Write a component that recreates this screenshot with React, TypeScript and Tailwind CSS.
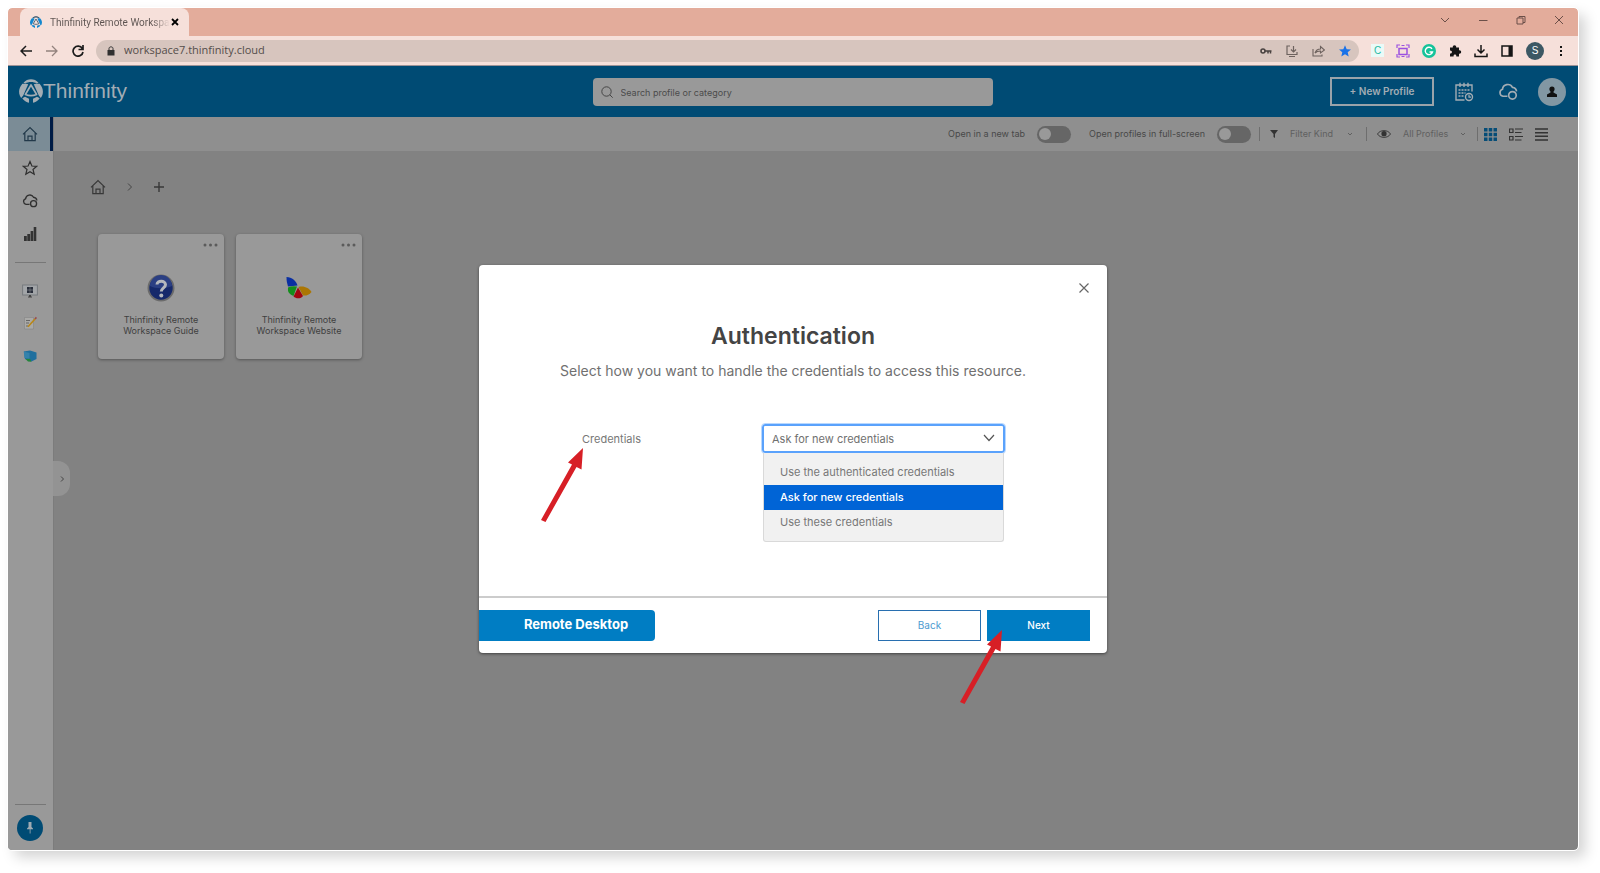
import React from "react";

function ThinfinityMark({ className, dark = "currentColor", light = "currentColor" }: { className?: string; dark?: string; light?: string }) {
  return (
    <svg viewBox="0 0 24 24" className={className} aria-hidden="true">
      <path d="M4.500 3.800C8.500 -.8 15.500 -.8 19.500 3.800L17.800 4.600C14.500 2.600 9.500 2.600 6.200 4.600Z" fill={light} />
      <path d="M12 6L17.600 15.500C14 17 10 17 6.400 15.500Z" fill="none" stroke={light} strokeWidth="1.700" strokeLinejoin="round" />
      <path d="M3.400 4.800C-.8 9.500 -.8 15 2.200 19L4.200 16.500 9.200 5.200C7.200 4.700 5.500 4.700 3.400 4.800Z" fill={dark} />
      <path d="M20.600 4.800C24.800 9.500 24.800 15 21.800 19L19.800 16.500 14.800 5.200C16.800 4.700 18.500 4.700 20.600 4.800Z" fill={dark} />
      <path d="M3.300 19.200L6 17.800 10 19.700V23.800C7.500 23.400 5 21.800 3.300 19.200ZM20.700 19.200L18 17.800 14 19.700V23.800C16.500 23.400 19 21.800 20.700 19.200Z" fill={dark} />
    </svg>
  );
}

function HomeIcon() {
  return (
    <svg viewBox="0 0 16 16" className="size-4" fill="none" stroke="currentColor" strokeWidth="1.2" aria-hidden="true">
      <path d="M1 8.400L8 1.600 15 8.400M2.800 7V14.600H13.200V7M6 14.500V10.200H10V14.500" />
    </svg>
  );
}

function StarIcon() {
  return (
    <svg viewBox="0 0 16 16" className="size-4" fill="none" stroke="currentColor" strokeWidth="1.2" aria-hidden="true">
      <path d="M8 1.500L9.900 6 14.700 6.300 11 9.500 12.200 14.300 8 11.700 3.800 14.300 5 9.500 1.300 6.300 6.100 6Z" />
    </svg>
  );
}

function CloudLockIcon({ className = "size-4" }: { className?: string }) {
  return (
    <svg viewBox="0 0 18 18" className={className} fill="none" stroke="currentColor" strokeWidth="1.500" aria-hidden="true">
      <path d="M8.500 12.800H4.500A3.200 3.200 0 0 1 4 6.600 4.800 4.800 0 0 1 13 4.800C15 5 16.500 6.200 16.700 8.500" />
      <circle cx="13" cy="12" r="3.400" />
    </svg>
  );
}

function BarsIcon() {
  return (
    <svg viewBox="0 0 16 16" className="size-4" fill="#333333" aria-hidden="true">
      <path d="M2 10h2.800v5H2zM5.300 8h2.800v7H5.300zM8.600 5h2.600v10H8.600zM11.700 1h2.600v14h-2.600z" />
    </svg>
  );
}

function MonitorIcon() {
  return (
    <svg viewBox="0 0 16 14" className="h-3.5 w-4" aria-hidden="true">
      <rect x=".6" y="1" width="14.800" height="10" fill="#a2a5a8" stroke="#777b7e" strokeWidth="1" />
      <path d="M5 3h2.800v2.700H5zM8.200 3H11v2.700H8.200zM5 6.200h2.800V9H5zM8.200 6.200H11V9H8.200z" fill="#292e3a" />
      <path d="M7 11h2v1.500h1v1H6v-1h1z" fill="#444" />
    </svg>
  );
}

function NoteIcon() {
  return (
    <svg viewBox="0 0 16 16" className="size-4" aria-hidden="true">
      <path d="M2.500 2.500H11.500V14H2.500Z" fill="#a9a9a7" stroke="#858585" strokeWidth=".6" />
      <path d="M4 5.500H8M4 8H7M4 11H6" stroke="#666" strokeWidth="1" />
      <path d="M6 11.800L13 4" stroke="#b98716" strokeWidth="1.600" />
      <path d="M13 4L14.400 2.400" stroke="#9b4b4b" strokeWidth="1.600" />
    </svg>
  );
}

function BoxIcon() {
  return (
    <svg viewBox="0 0 16 16" className="size-4" aria-hidden="true">
      <path d="M1.800 3.500L8 2.500 14.500 4.500V11L9.500 13.500 3 11Z" fill="#1f6f9e" />
      <path d="M1.800 3.500L7.500 5V11L2.500 10Z" fill="#3482ab" />
      <path d="M3.500 11L8 10.800 9.500 13.800 6 13.500Z" fill="#24843c" />
    </svg>
  );
}

function CalendarIcon() {
  return (
    <svg viewBox="0 0 20 20" className="size-5" fill="none" stroke="currentColor" strokeWidth="1.400" aria-hidden="true">
      <path d="M18 9.500V3H2V18H10.500M6 .8V5M10 .8V5M14 .8V5" />
      <path d="M4.500 8H15.500M4.500 11H11.500M4.500 14H9.500" strokeWidth="1.700" strokeDasharray="2 1" />
      <circle cx="15" cy="15" r="3.500" />
      <path d="M15 12.800V15.200H17" strokeWidth="1.200" />
    </svg>
  );
}

function Arrow({ className }: { className?: string }) {
  return (
    <svg viewBox="0 0 44 76" className={className} aria-hidden="true">
      <path d="M42 1L40.500 22.500 35.500 20 4.500 75 0 73 31 17.500 27 15.500Z" fill="#d71f26" />
    </svg>
  );
}

function Caret() {
  return (
    <svg viewBox="0 0 8 8" className="size-2" fill="none" stroke="currentColor" aria-hidden="true">
      <path d="M2 3L4 5 6 3" />
    </svg>
  );
}

function TabStrip() {
  return (
    <div className="flex h-7 items-end bg-[#e3ac9b] pl-3">
      <div className="flex h-7 w-[169px] items-center rounded-t-lg bg-[#f6e0da] pl-2.5">
        <ThinfinityMark className="size-3 shrink-0" dark="#1287cf" light="#35546c" />
        <span className="ml-2 whitespace-nowrap bg-gradient-to-r from-[#5c5350] from-85% to-transparent bg-clip-text font-['Roboto',sans-serif] text-[10px] text-transparent">
          Thinfinity Remote Workspa
        </span>
        <button type="button" aria-label="Close tab" className="ml-auto mr-2.5 text-black">
          <svg viewBox="0 0 8 8" className="size-2" stroke="currentColor" strokeWidth="1.800"><path d="M1 1L7 7M7 1L1 7" /></svg>
        </button>
      </div>
      <div className="ml-auto flex h-6 items-center gap-7 self-start pr-3.5 text-[#6b4f48]">
        <button type="button" aria-label="Search tabs"><svg viewBox="0 0 10 10" className="size-2.5" fill="none" stroke="currentColor"><path d="M1 3L5 7 9 3" /></svg></button>
        <button type="button" aria-label="Minimize"><svg viewBox="0 0 10 10" className="size-2.5" fill="none" stroke="currentColor"><path d="M1 5.500H9.500" /></svg></button>
        <button type="button" aria-label="Restore"><svg viewBox="0 0 10 10" className="size-2.5" fill="none" stroke="currentColor"><path d="M1 3H7V9H1ZM3 3V1.500H9V7.500H7" /></svg></button>
        <button type="button" aria-label="Close"><svg viewBox="0 0 10 10" className="size-2.5" fill="none" stroke="currentColor"><path d="M1 1L9 9M9 1L1 9" /></svg></button>
      </div>
    </div>
  );
}

function AddressBar() {
  return (
    <div className="flex h-[30px] items-center border-b border-[#9d9296] bg-[#f6e0da] pl-3 pr-3 text-[#1c1c1c]">
      <div className="flex items-center gap-3.5">
        <button type="button" aria-label="Back in history"><svg viewBox="0 0 12 12" className="size-3" fill="none" stroke="currentColor" strokeWidth="1.500"><path d="M12 6H1M6 1L1 6 6 11" /></svg></button>
        <button type="button" aria-label="Forward" className="text-[#93837e]"><svg viewBox="0 0 12 12" className="size-3" fill="none" stroke="currentColor" strokeWidth="1.300"><path d="M0 6H11M6 1L11 6 6 11" /></svg></button>
        <button type="button" aria-label="Reload"><svg viewBox="0 0 12 12" className="size-3" fill="none" stroke="currentColor" strokeWidth="1.700"><path d="M10.300 3.500A5 5 0 1 0 11 7M11 0V4.500H6.500" /></svg></button>
      </div>
      <div className="ml-3 flex h-[22px] flex-1 items-center rounded-full bg-[#d7c5be] pl-2.5 pr-2">
        <svg viewBox="0 0 10 10" className="size-2.5" aria-hidden="true"><path d="M1.500 4H8.500V9.500H1.500Z" fill="#303030" /><path d="M3 4V2.500C3 .3 7 .3 7 2.500V4" fill="none" stroke="#303030" /></svg>
        <input aria-label="Address" readOnly defaultValue="workspace7.thinfinity.cloud" className="ml-2 min-w-0 flex-1 bg-transparent font-['Open_Sans',sans-serif] text-[11px] text-[#544d4a] outline-none" />
        <div className="flex items-center gap-3.5 text-[#6d625e]">
          <svg viewBox="0 0 12 12" className="size-3" aria-hidden="true"><circle cx="3" cy="6" r="2" fill="none" stroke="#494240" strokeWidth="1.600" /><path d="M5 6H11.500M8 6V8.500M10.500 6V8.500" stroke="#494240" strokeWidth="1.500" /></svg>
          <svg viewBox="0 0 12 12" className="size-3" fill="none" stroke="currentColor" strokeWidth="1.200" aria-hidden="true"><path d="M4 1H1V9.500H11V7M3 11.500H9M7.500 1V6.500M5 4.500L7.500 7 10 4.500" /></svg>
          <svg viewBox="0 0 13 12" className="h-3 w-[13px]" fill="none" stroke="currentColor" strokeWidth="1.100" aria-hidden="true"><path d="M1 4V11H10V9.500M3 8C4 5 6 4 8.500 4V1.500L12.500 5 8.500 8V6C6 6 4.500 6.500 3 8Z" /></svg>
          <svg viewBox="0 0 12 12" className="size-3" fill="#1a73e8" aria-hidden="true"><path d="M6 .3L7.700 4.200 12 4.500 8.700 7.300 9.700 11.600 6 9.300 2.300 11.600 3.300 7.300 0 4.500 4.300 4.200Z" /></svg>
        </div>
      </div>
      <div className="ml-3 flex items-center gap-3">
        <span className="grid size-[13px] place-items-center bg-[#eafaf7] font-['Liberation_Sans',sans-serif] text-[10px] leading-none text-[#27b9a4]">C</span>
        <svg viewBox="0 0 14 14" className="size-3.5" fill="none" stroke="#9b51e0" aria-hidden="true"><path d="M3 4.500H11V10.500H3Z" strokeWidth="1.500" /><path d="M1 4V1H4M10 1H13V4M13 10V13H10M4 13H1V10M5.500 1.500H8.500M5.500 12.500H8.500" strokeWidth="1.200" /></svg>
        <svg viewBox="0 0 14 14" className="size-3.5" aria-hidden="true"><circle cx="7" cy="7" r="7" fill="#15c39a" /><path d="M10 4.800A3.700 3.700 0 1 0 10.500 8H7.500M10.500 8L9 10" fill="none" stroke="#fff" strokeWidth="1.400" /></svg>
        <svg viewBox="0 0 14 14" className="size-3.5" fill="#151515" aria-hidden="true"><path d="M2 3.500H4.800C4.300 .6 8.700 .6 8.200 3.500H11V6.300C13.900 5.800 13.900 10.200 11 9.700V12.500H8.300C8.700 9.900 5.200 9.900 5.600 12.500H2V9.500C4.600 9.900 4.600 6.200 2 6.500Z" /></svg>
        <svg viewBox="0 0 14 14" className="size-3.5" fill="none" stroke="#151515" strokeWidth="1.500" aria-hidden="true"><path d="M7 1V9M3.500 5.500L7 9 10.500 5.500M1 9.500V12.500H13V9.500" /></svg>
        <svg viewBox="0 0 14 14" className="size-3.5" aria-hidden="true"><path d="M2 2H12V12H2Z" fill="none" stroke="#151515" strokeWidth="1.500" /><path d="M8.500 2H12V12H8.500Z" fill="#151515" /></svg>
        <span className="grid size-[18px] place-items-center rounded-full bg-[#3c5864] font-['Liberation_Sans',sans-serif] text-[10px] text-white">S</span>
        <svg viewBox="0 0 10 14" className="h-3.5 w-2.5" fill="#151515" aria-hidden="true"><path d="M4 2H6V4H4ZM4 6H6V8H4ZM4 10H6V12H4Z" /></svg>
      </div>
    </div>
  );
}

function AppHeader() {
  return (
    <header className="grid h-[51px] grid-cols-[1fr_400px_1fr] items-center bg-[#004b74] pl-[11px] pr-3">
      <a href="#home" className="flex items-center pb-0.5 text-[#a3adb4]">
        <ThinfinityMark className="size-6" />
        <span className="font-['Liberation_Sans',sans-serif] text-[21px] leading-6">Thinfinity</span>
      </a>
      <label className="flex h-7 items-center rounded-sm bg-[#999999] px-2">
        <svg viewBox="0 0 12 12" className="size-3" fill="none" stroke="#464646" aria-hidden="true"><circle cx="5.500" cy="5.500" r="4.700" /><path d="M8.800 8.800L11.700 11.700" /></svg>
        <input type="search" aria-label="Search" placeholder="Search profile or category" className="ml-2 min-w-0 flex-1 bg-transparent pt-0.5 text-[9px] outline-none placeholder:text-[#4b4b4b]" />
      </label>
      <div className="flex items-center justify-end text-[#a3adb4]">
        <button type="button" className="h-[29px] w-[104px] border-2 border-[#9aa3aa] text-[10px] font-semibold">+ New Profile</button>
        <button type="button" aria-label="Schedule" className="ml-5"><CalendarIcon /></button>
        <button type="button" aria-label="Cloud access" className="ml-6"><CloudLockIcon className="size-5" /></button>
        <button type="button" aria-label="Account" className="ml-5 grid size-7 place-items-center rounded-full bg-[#8297a3]">
          <svg viewBox="0 0 12 12" className="size-3" fill="#111" aria-hidden="true"><circle cx="6" cy="3" r="2.600" /><path d="M4.500 4H7.500V6.500L11 8.500V11H1V8.500L4.500 6.500Z" /></svg>
        </button>
      </div>
    </header>
  );
}

function Toggle({ label }: { label: string }) {
  return (
    <label className="flex items-center gap-3">
      {label}
      <input type="checkbox" className="peer sr-only" />
      <span className="flex h-[17px] w-[34px] items-center rounded-full bg-[#666666] px-0.5 peer-checked:justify-end">
        <span className="size-3 rounded-full bg-[#999999]" />
      </span>
    </label>
  );
}

function FilterBar() {
  return (
    <div className="flex h-[34px] items-center justify-end bg-[#8f8f8f] pr-[30px] text-[9px] text-[#484848]">
      <div className="flex items-center gap-[18px]">
        <Toggle label="Open in a new tab" />
        <Toggle label="Open profiles in full-screen" />
      </div>
      <span className="ml-2 h-3.5 w-px bg-[#6e6e6e]" />
      <svg viewBox="0 0 8 8" className="ml-2.5 size-2" fill="#333" aria-hidden="true"><path d="M0 0H8L5 4V8L3.500 7V4Z" /></svg>
      <button type="button" className="ml-3 flex w-[64px] items-center justify-between text-[#606060]">Filter Kind <Caret /></button>
      <span className="ml-3 h-3.5 w-px bg-[#6e6e6e]" />
      <svg viewBox="0 0 14 10" className="ml-2.5 h-2.5 w-3.5" aria-hidden="true"><path d="M.5 5C3 .5 11 .5 13.500 5 11 9.500 3 9.500 .5 5Z" fill="none" stroke="#3c3c3c" /><circle cx="7" cy="4.700" r="2.600" fill="#333" /></svg>
      <button type="button" className="ml-3 flex w-[64px] items-center justify-between text-[#606060]">All Profiles <Caret /></button>
      <span className="ml-2.5 h-3.5 w-px bg-[#6e6e6e]" />
      <div className="ml-1.5 flex items-center gap-3">
        <button type="button" aria-label="Grid view"><svg viewBox="0 0 13 13" className="size-[13px]" fill="#064d77"><path d="M0 0h3.500v3.500H0zM4.750 0h3.500v3.500h-3.500zM9.500 0H13v3.500H9.500zM0 4.750h3.500v3.500H0zM4.750 4.750h3.500v3.500h-3.500zM9.500 4.750H13v3.500H9.500zM0 9.500h3.500V13H0zM4.750 9.500h3.500V13h-3.500zM9.500 9.500H13V13H9.500z" /></svg></button>
        <button type="button" aria-label="Detail view"><svg viewBox="0 0 14 13" className="h-[13px] w-3.5" fill="none" stroke="#333" strokeWidth="1.200"><path d="M.5 1H4V4.500H.5ZM.5 8.500H4V12H.5ZM6 1H14M6 4.500H12.500M6 8.500H14M6 12H12.500" /></svg></button>
        <button type="button" aria-label="List view"><svg viewBox="0 0 13 13" className="size-[13px]" fill="none" stroke="#333" strokeWidth="1.400"><path d="M0 1H13M0 4.700H13M0 8.300H13M0 12H13" /></svg></button>
      </div>
    </div>
  );
}

function Sidebar() {
  return (
    <nav className="relative flex w-[46px] shrink-0 flex-col border-r border-[#7c7c7c] bg-[#999999] text-[#303030]">
      <a href="#home" aria-label="Home" className="grid h-[34px] place-items-center border-r-[3px] border-[#001c46] bg-[#7b8c96] pl-0.5 text-[#22394a]"><HomeIcon /></a>
      <a href="#favorites" aria-label="Favorites" className="grid h-[33px] place-items-center pr-px"><StarIcon /></a>
      <a href="#cloud" aria-label="Cloud" className="grid h-[33px] place-items-center pr-px"><CloudLockIcon /></a>
      <a href="#analytics" aria-label="Analytics" className="grid h-[33px] place-items-center pr-px"><BarsIcon /></a>
      <hr className="mx-[7px] mt-3 border-[#777777]" />
      <div className="mt-3 flex flex-col">
        <a href="#desktops" aria-label="Desktops" className="grid h-8 place-items-center pr-px"><MonitorIcon /></a>
        <a href="#notes" aria-label="Notes" className="grid h-[31px] place-items-center pr-px"><NoteIcon /></a>
        <a href="#storage" aria-label="Storage" className="grid h-[35px] place-items-center pr-px"><BoxIcon /></a>
      </div>
      <hr className="mx-[7px] mt-auto border-[#777777]" />
      <button type="button" aria-label="Pin menu" className="mb-[9px] ml-[9px] mt-2.5 grid size-[26px] place-items-center rounded-full bg-[#004b74]">
        <svg viewBox="0 0 10 12" className="h-3 w-2.5" fill="#9fabb2" aria-hidden="true"><path d="M3.500 0H6.500V5L8 6.500V7.200H5.500V11.500H4.700V7.200H2V6.500L3.500 5Z" /></svg>
      </button>
      <button type="button" aria-label="Expand menu" className="absolute left-full top-[344px] grid h-[35px] w-[17px] place-items-center rounded-r-xl bg-[#939393] text-[#444]">
        <svg viewBox="0 0 8 8" className="size-2" fill="none" stroke="currentColor"><path d="M3 1.500L5.500 4 3 6.500" /></svg>
      </button>
    </nav>
  );
}

function ProfileCard({ icon, title, detail }: { icon: React.ReactNode; title: string; detail: string }) {
  return (
    <article className="flex h-[125px] w-[126px] flex-col items-center rounded-sm bg-[#999999] shadow-[0_1px_3px_rgba(0,0,0,0.35)]">
      <button type="button" aria-label="More options" className="mr-1.5 mt-[9px] self-end text-[#5b5b5b]">
        <svg viewBox="0 0 15 4" className="h-1 w-[15px]" fill="currentColor"><circle cx="2" cy="2" r="1.500" /><circle cx="7.500" cy="2" r="1.500" /><circle cx="13" cy="2" r="1.500" /></svg>
      </button>
      <div className="mt-[27px] grid h-7 place-items-center">{icon}</div>
      <h2 className="mt-3 text-center text-[9px] leading-[11px] text-[#3f3f3f]">{title}<br />{detail}</h2>
    </article>
  );
}

const helpIcon = (
  <svg viewBox="0 0 28 28" className="size-7" aria-hidden="true">
    <circle cx="14" cy="14" r="12.600" fill="#16296b" stroke="#6b6b6b" strokeWidth="1.800" />
    <path d="M3 12A11 11 0 0 1 25 12C18 15 9 15 3 12Z" fill="#2b3f83" />
    <path d="M10 10.500C10 6 18.500 6 18.500 10.800 18.500 14 14.300 13.800 14.300 17.500" fill="none" stroke="#b5b8bd" strokeWidth="3" />
    <circle cx="14.300" cy="21.500" r="2" fill="#b5b8bd" />
  </svg>
);

const butterflyIcon = (
  <svg viewBox="0 0 28 24" className="h-6 w-7" aria-hidden="true">
    <path d="M1.500 1C7 1 11 5 12.500 9.500L3 10.500C2 7 1.500 5 1.500 1Z" fill="#0a2fa2" />
    <path d="M3 11.500Q7 9.500 12 10.500L8.500 20C4 18 2.500 16 3 11.500Z" fill="#148e1c" />
    <path d="M13 11.500L18 20C16 23 11 23 8.500 20.500Z" fill="#a30610" />
    <path d="M13.500 11C19 9.500 24 12 26.500 16 24 19 21 20 18 19.500Z" fill="#ab7603" />
  </svg>
);

function Dialog() {
  const options = ["Use the authenticated credentials", "Ask for new credentials", "Use these credentials"];
  return (
    <section role="dialog" aria-labelledby="dialog-title" className="relative w-[628px] rounded-sm bg-white shadow-[0_1px_3px_rgba(0,0,0,0.5)]">
      <div className="flex h-[57px] justify-end pr-[18px] pt-[18px]">
        <button type="button" aria-label="Close dialog" className="size-2.5 text-[#666]">
          <svg viewBox="0 0 10 10" className="size-2.5" fill="none" stroke="currentColor" strokeWidth="1.200"><path d="M.5 .5L9.500 9.500M9.500 .5L.5 9.500" /></svg>
        </button>
      </div>
      <h1 id="dialog-title" className="text-center text-[23px] font-semibold leading-7 text-[#444]">Authentication</h1>
      <p className="mt-[11px] text-center text-[14px] leading-5 text-[#707070]">Select how you want to handle the credentials to access this resource.</p>
      <div className="mt-[43px] flex h-[172px] items-start pl-[103px]">
        <label htmlFor="credentials" className="relative w-[180px] text-[11px] leading-[30px] text-[#777]">
          Credentials
          <Arrow className="absolute -left-[41px] top-[23px] h-[76px] w-[44px]" />
        </label>
        <div className="relative w-[243px]">
          <select id="credentials" defaultValue={options[1]} className="h-[29px] w-full appearance-none rounded-[3px] border-2 border-[#5aa2fc] bg-white px-2 pt-0.5 text-[11px] text-[#707070] outline outline-[#b8d8ff]">
            {options.map((option) => <option key={option}>{option}</option>)}
          </select>
          <svg viewBox="0 0 12 8" className="pointer-events-none absolute right-2.5 top-2.5 h-2 w-3" fill="none" stroke="#555" strokeWidth="1.200" aria-hidden="true"><path d="M1 1L6 6.500 11 1" /></svg>
          <ul role="listbox" aria-label="Credential options" className="absolute inset-x-px top-[29px] h-[89px] rounded-b-[3px] border border-t-0 border-[#d9d9d9] bg-[#f1f1f1] pt-[7px] text-[11px] leading-[25px] text-[#777]">
            {options.map((option, index) => (
              <li key={option} role="option" aria-selected={index === 1} className={index === 1 ? "bg-[#0064d6] px-4 font-medium text-white" : "px-4"}>{option}</li>
            ))}
          </ul>
        </div>
      </div>
      <footer className="flex h-[57px] items-start border-t-2 border-[#cccccc] pr-[17px] pt-3">
        <strong className="h-[31px] w-[176px] rounded-r bg-[#007dc3] pl-[18px] text-center text-[13px] font-bold leading-[28px] text-white">Remote Desktop</strong>
        <button type="button" className="ml-auto h-[31px] w-[103px] border border-[#286fb0] text-[10px] text-[#4d9bd0]">Back</button>
        <button type="button" className="relative ml-1.5 h-[31px] w-[103px] bg-[#007dc3] text-[10px] font-medium text-white">
          Next
          <Arrow className="absolute -left-[27px] top-[19px] h-[76px] w-[44px]" />
        </button>
      </footer>
    </section>
  );
}

export default function App() {
  return (
    <div className="min-h-screen bg-white p-2 pb-[23px] pr-[22px] font-['Inter',sans-serif]">
      <div className="relative flex min-h-[calc(100vh-31px)] flex-col overflow-clip rounded-sm shadow-[7px_7px_14px_rgba(0,0,0,0.18)] outline outline-white">
        <TabStrip />
        <AddressBar />
        <AppHeader />
        <div className="flex flex-1 bg-[#828282]">
          <Sidebar />
          <main className="min-w-0 flex-1">
            <FilterBar />
            <div className="flex items-center pl-9 pt-7 text-[#383838]">
              <a href="#home" aria-label="Root folder"><HomeIcon /></a>
              <svg viewBox="0 0 8 10" className="ml-5 h-2.5 w-2" fill="none" stroke="#444" aria-hidden="true"><path d="M2 1.500L5.500 5 2 8.500" /></svg>
              <button type="button" aria-label="Add folder" className="ml-5"><svg viewBox="0 0 10 10" className="size-2.5" stroke="currentColor" strokeWidth="1.400"><path d="M5 0V10M0 5H10" /></svg></button>
            </div>
            <div className="mt-[39px] flex gap-3 pl-11">
              <ProfileCard icon={helpIcon} title="Thinfinity Remote" detail="Workspace Guide" />
              <ProfileCard icon={butterflyIcon} title="Thinfinity Remote" detail="Workspace Website" />
            </div>
          </main>
        </div>
        <div className="absolute inset-x-0 top-[257px] flex justify-center">
          <Dialog />
        </div>
      </div>
    </div>
  );
}
